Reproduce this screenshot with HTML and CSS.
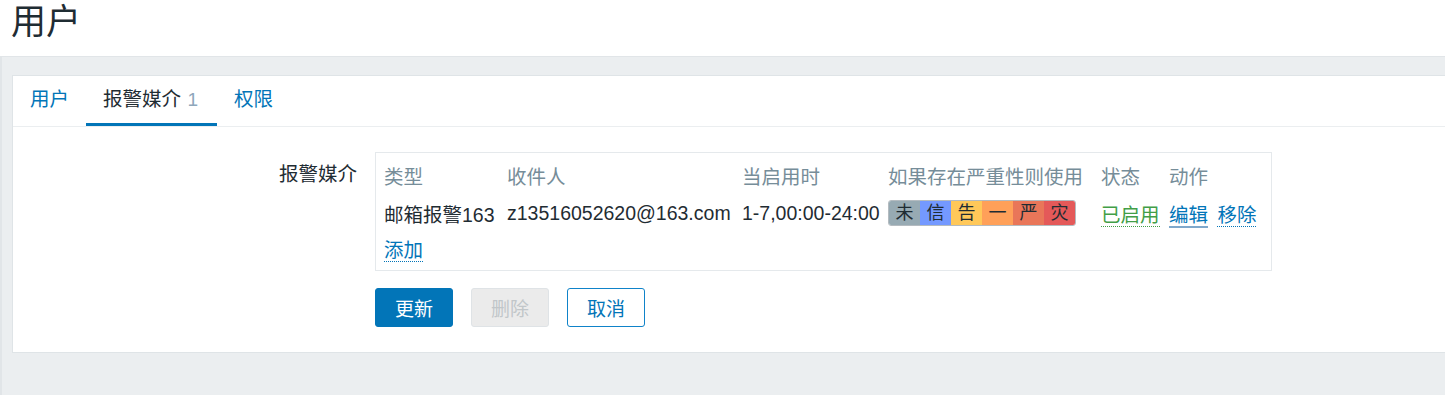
FILE: index.html
```html
<!DOCTYPE html>
<html>
<head>
    <title>用户</title>
    <link rel="stylesheet" href="styles.css">
</head>
<body>
  <header class="page-header">
    <h1>用户</h1>
  </header>

  <div class="wrapper">
    <div class="panel">
      <ul class="tabs">
        <li><a href="#">用户</a></li>
        <li class="active"><a href="#">报警媒介 <span class="count">1</span></a></li>
        <li><a href="#">权限</a></li>
      </ul>

      <div class="form-row">
        <label class="form-label">报警媒介</label>
        <div class="form-field">
          <div class="media-box">
            <table class="media-table">
              <thead>
                <tr>
                  <th class="col-type">类型</th>
                  <th class="col-to">收件人</th>
                  <th class="col-when">当启用时</th>
                  <th class="col-sev">如果存在严重性则使用</th>
                  <th class="col-status">状态</th>
                  <th>动作</th>
                </tr>
              </thead>
              <tbody>
                <tr>
                  <td>邮箱报警163</td>
                  <td>z13516052620@163.com</td>
                  <td>1-7,00:00-24:00</td>
                  <td>
                    <div class="severity">
                      <span class="sev na">未</span><span class="sev info">信</span><span class="sev warn">告</span><span class="sev avg">一</span><span class="sev high">严</span><span class="sev disaster">灾</span>
                    </div>
                  </td>
                  <td><a href="#" class="link green">已启用</a></td>
                  <td><a href="#" class="link focus">编辑</a> <a href="#" class="link">移除</a></td>
                </tr>
                <tr class="add-row">
                  <td colspan="6"><a href="#" class="link">添加</a></td>
                </tr>
              </tbody>
            </table>
          </div>

          <div class="buttons">
            <button class="btn primary">更新</button>
            <button class="btn disabled" disabled>删除</button>
            <button class="btn alt">取消</button>
          </div>
        </div>
      </div>
    </div>
  </div>
</body>
</html>
```

FILE: styles.css
```css
body {
    margin: 0;
    font-family: "Liberation Sans", "Noto Sans CJK SC", sans-serif;
    font-size: 19.5px;
    color: #1f2c33;
    background: #fff;
}

a {
    text-decoration: none;
}

.page-header {
    height: 56px;
    padding-left: 11px;
}

.page-header h1 {
    margin: 0;
    font-weight: normal;
    font-size: 35px;
    line-height: 44px;
}

.wrapper {
    background-color: #ebeef0;
    border-top: 1px solid #e1e5e8;
    border-left: 2px solid #e1e5e8;
    padding: 18px 0 42px 10px;
}

.panel {
    background-color: #fff;
    border: 1px solid #dfe4e7;
    border-right: none;
    padding-bottom: 25px;
}

.tabs {
    list-style: none;
    margin: 0;
    padding: 0;
    display: flex;
    border-bottom: 1px solid #ebeef0;
    height: 50px;
}

.tabs li {
    display: flex;
}

.tabs li a {
    display: block;
    padding: 0 17px;
    line-height: 47px;
    color: #0275b8;
    border-bottom: 3px solid transparent;
}

.tabs li.active a {
    color: #1f2c33;
    border-bottom-color: #0275b8;
    padding-right: 19px;
}

.tabs .count {
    color: #8ea7bb;
    font-size: 19px;
    margin-left: 1px;
}

.form-row {
    display: grid;
    grid-template-columns: 344px 1fr;
    column-gap: 18px;
    padding-top: 25px;
}

.form-label {
    text-align: right;
    line-height: 38px;
    padding-top: 3px;
}

.media-box {
    width: 878px;
    border: 1px solid #e5e9ec;
    padding: 3px 9px 5px 8px;
}

.media-table {
    border-collapse: collapse;
}

.media-table th {
    font-weight: normal;
    color: #768d99;
    text-align: left;
    height: 38px;
    padding: 0;
    white-space: nowrap;
}

.media-table td {
    height: 38px;
    padding: 0;
    white-space: nowrap;
}

.col-type { width: 123px; }
.col-to { width: 235px; }
.col-when { width: 146px; }
.col-sev { width: 213px; }
.col-status { width: 68px; }

.media-table .add-row td {
    height: 33px;
}

.link {
    color: #0275b8;
    border-bottom: 1px dotted #0275b8;
}

.link.green {
    color: #429e47;
    border-bottom-color: #429e47;
}

.link.focus {
    border-bottom: 2px solid #7fa8cb;
}

.media-table td .link + .link {
    margin-left: 4px;
}

.severity {
    display: inline-flex;
    border: 1px solid #b4bbc0;
    border-radius: 3px;
    overflow: hidden;
    vertical-align: middle;
}

.sev {
    display: block;
    width: 31px;
    height: 24px;
    line-height: 24px;
    text-align: center;
    font-size: 18px;
    color: #1f2c33;
}

.sev.na { background-color: #97aab3; }
.sev.info { background-color: #7499ff; }
.sev.warn { background-color: #ffc859; }
.sev.avg { background-color: #ffa059; }
.sev.high { background-color: #e97659; }
.sev.disaster { background-color: #e45959; }

.buttons {
    display: flex;
    gap: 18px;
    margin-top: 17px;
}

.btn {
    width: 78px;
    height: 39px;
    border-radius: 3px;
    font-family: inherit;
    font-size: 19px;
    border: 1px solid #0275b8;
    padding: 0;
}

.btn.primary {
    background-color: #0275b8;
    color: #fff;
}

.btn.disabled {
    background-color: #ebebeb;
    border-color: #dfe3e6;
    color: #c1c6c9;
}

.btn.alt {
    background-color: #fff;
    color: #0275b8;
    border-color: #0f83c9;
}
```
